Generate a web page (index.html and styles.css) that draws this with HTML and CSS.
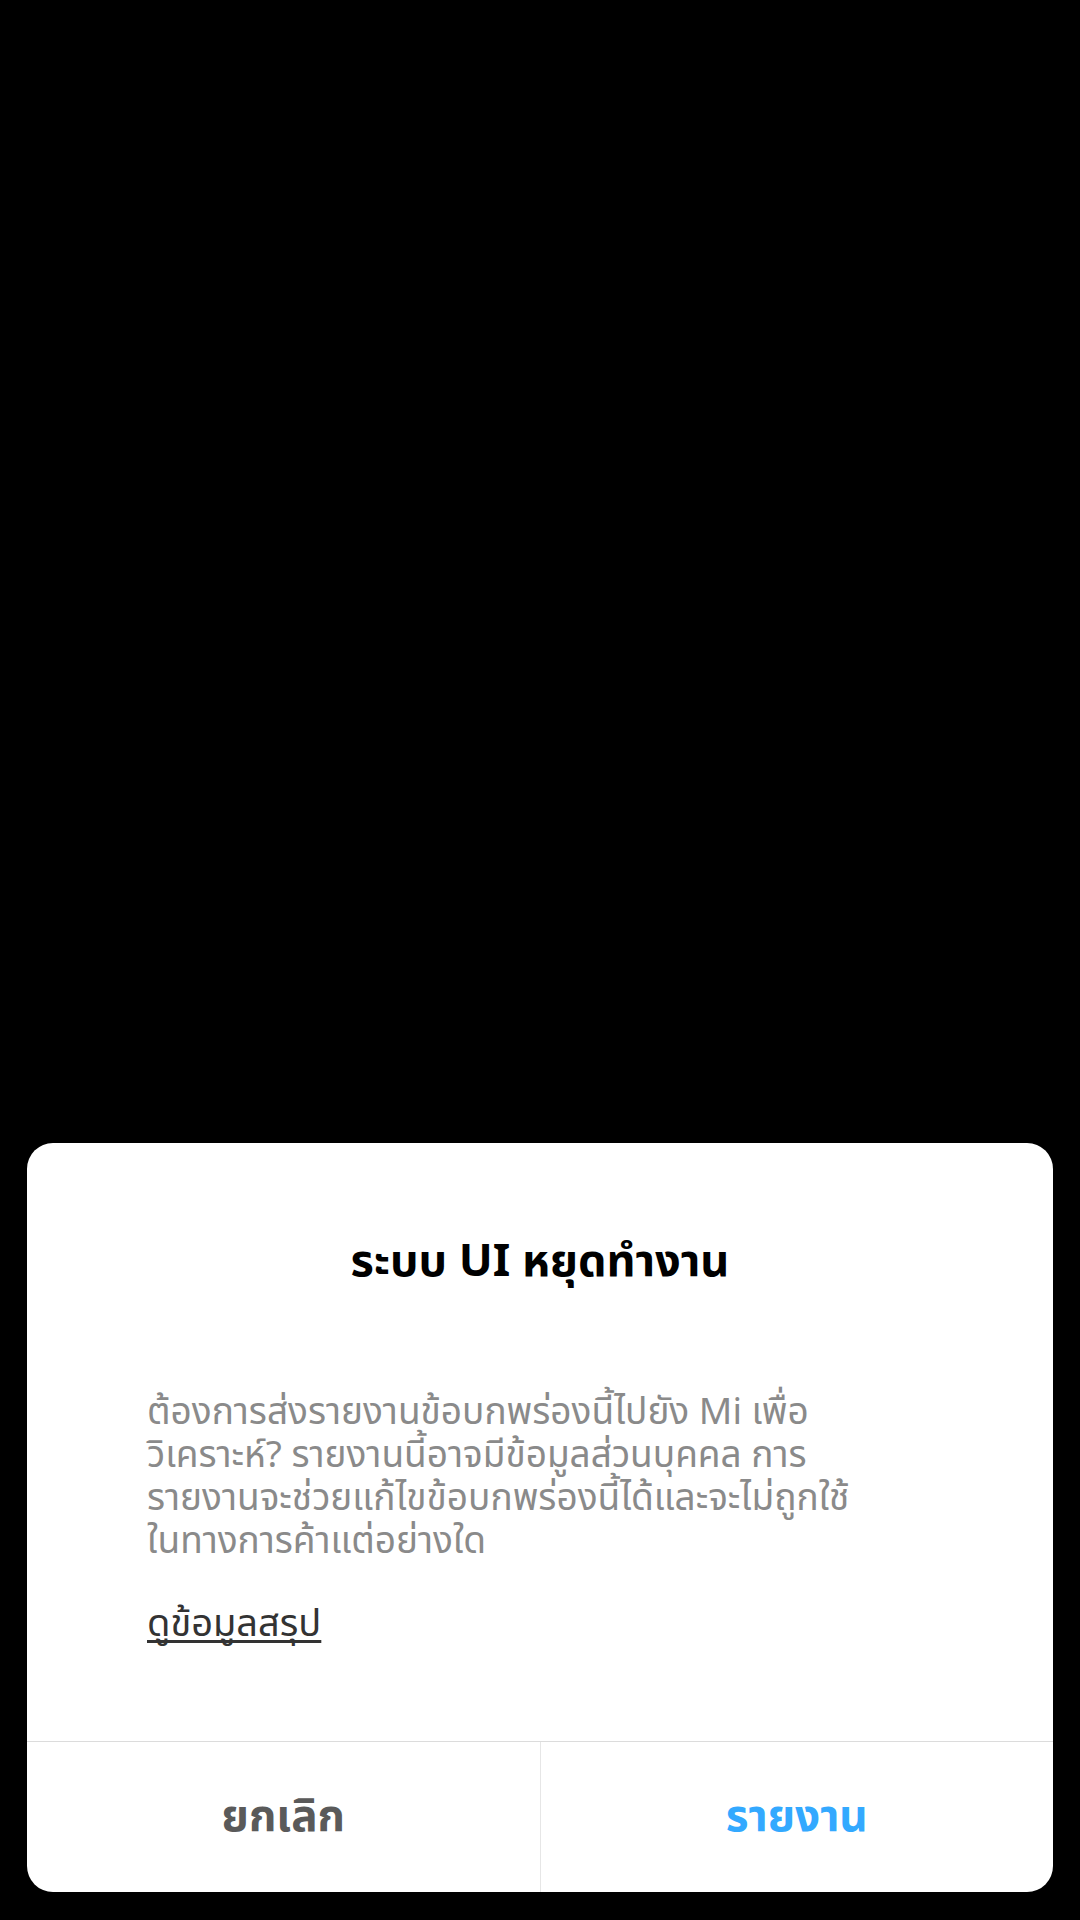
FILE: index.html
```html
<!DOCTYPE html>
<html>
<head>
    <meta charset="utf-8">
    <link rel="stylesheet" href="styles.css">
</head>
<body>
    <div class="dialog">
        <h1 class="dialog-title">ระบบ UI หยุดทำงาน</h1>

        <p class="dialog-message">
            ต้องการส่งรายงานข้อบกพร่องนี้ไปยัง Mi เพื่อ<br>
            วิเคราะห์? รายงานนี้อาจมีข้อมูลส่วนบุคคล การ<br>
            รายงานจะช่วยแก้ไขข้อบกพร่องนี้ได้และจะไม่ถูกใช้<br>
            ในทางการค้าแต่อย่างใด
        </p>

        <a class="dialog-link" href="#">ดูข้อมูลสรุป</a>

        <div class="dialog-buttons">
            <button class="btn btn-cancel">ยกเลิก</button>
            <button class="btn btn-report">รายงาน</button>
        </div>
    </div>
</body>
</html>
```

FILE: styles.css
```css
html, body {
    margin: 0;
    height: 100%;
}

body {
    font-family: "Noto Sans", "Noto Sans Thai", sans-serif;
    background-color: #000000;
    display: flex;
    flex-direction: column;
    justify-content: flex-end;
    padding: 0 27px 28px;
    box-sizing: border-box;
}

.dialog {
    background-color: #ffffff;
    border-radius: 26px;
    overflow: hidden;
    padding-top: 88px;
}

.dialog-title {
    margin: 0;
    font-size: 45px;
    line-height: 56px;
    font-weight: bold;
    color: #000000;
    text-align: center;
}

.dialog-message {
    margin: 101px 120px 0;
    font-size: 37px;
    line-height: 43px;
    color: #8a8a8a;
}

.dialog-link {
    display: inline-block;
    margin: 40px 120px 0;
    font-size: 38px;
    line-height: 42px;
    color: #333333;
    text-decoration: underline;
    text-decoration-thickness: 3px;
    text-decoration-skip-ink: none;
    text-underline-offset: 4px;
}

.dialog-buttons {
    display: flex;
    margin-top: 99px;
    border-top: 1px solid #dcdcdc;
}

.btn {
    flex: 1;
    height: 150px;
    border: none;
    background: none;
    font-family: inherit;
    font-size: 44px;
    font-weight: bold;
    padding: 0;
}

.btn-cancel {
    color: #5a5a5a;
    border-right: 1px solid #e6e6e6;
}

.btn-report {
    color: #33a9ff;
}
```
